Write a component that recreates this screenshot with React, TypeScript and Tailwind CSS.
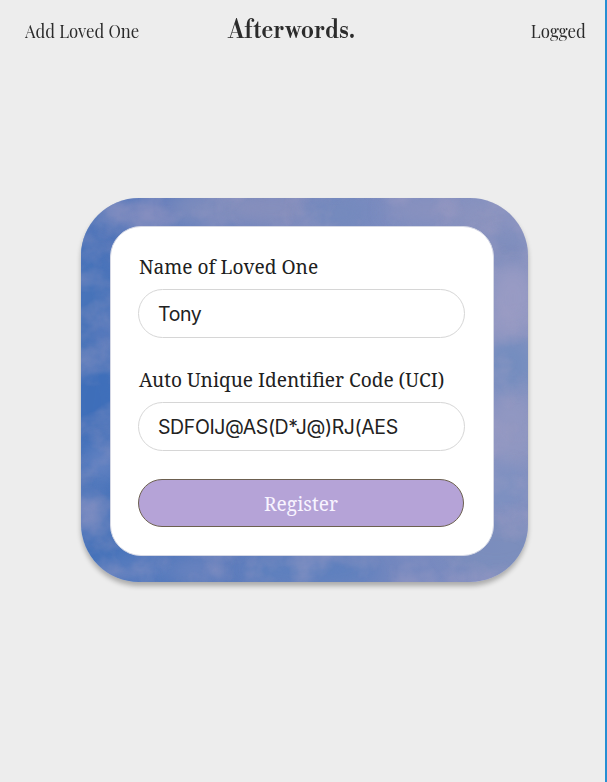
import React from "react";

const clouds = [
  { x: 25, y: 60, rx: 50, ry: 30, c: "#4f74b9", o: 0.7 },
  { x: 8, y: 155, rx: 30, ry: 110, c: "#4673ba", o: 0.8 },
  { x: 12, y: 205, rx: 30, ry: 45, c: "#3d6eba", o: 0.8 },
  { x: 22, y: 138, rx: 14, ry: 12, c: "#6f82c0", o: 0.55 },
  { x: 20, y: 265, rx: 18, ry: 20, c: "#7089c5", o: 0.7 },
  { x: 8, y: 315, rx: 16, ry: 22, c: "#8490c3", o: 0.7 },
  { x: 65, y: 15, rx: 35, ry: 12, c: "#7987bd", o: 0.8 },
  { x: 130, y: 10, rx: 40, ry: 18, c: "#8490bd", o: 0.75 },
  { x: 190, y: 10, rx: 40, ry: 20, c: "#8d92bc", o: 0.75 },
  { x: 255, y: 15, rx: 32, ry: 18, c: "#758abd", o: 0.9 },
  { x: 345, y: 12, rx: 42, ry: 13, c: "#8b92be", o: 0.8 },
  { x: 400, y: 20, rx: 25, ry: 15, c: "#8f95be", o: 0.7 },
  { x: 424, y: 53, rx: 22, ry: 18, c: "#7e8dbc", o: 0.9 },
  { x: 432, y: 100, rx: 24, ry: 34, c: "#9a9cc4", o: 0.9 },
  { x: 430, y: 168, rx: 26, ry: 28, c: "#738dbf", o: 0.9 },
  { x: 430, y: 233, rx: 26, ry: 38, c: "#9499c2", o: 0.8 },
  { x: 425, y: 290, rx: 20, ry: 20, c: "#7c91c1", o: 0.8 },
  { x: 415, y: 350, rx: 50, ry: 28, c: "#7b8ebc", o: 0.8 },
  { x: 60, y: 373, rx: 45, ry: 14, c: "#6080c0", o: 0.8 },
  { x: 115, y: 374, rx: 25, ry: 13, c: "#6f86c0", o: 0.8 },
  { x: 230, y: 373, rx: 70, ry: 16, c: "#5d80be", o: 0.9 },
];

function Sky() {
  return (
    <svg className="absolute inset-0 h-full w-full" viewBox="0 0 447 385" preserveAspectRatio="none" aria-hidden="true">
      <defs>
        <linearGradient id="sky" x1="0" y1="0.6" x2="1" y2="0.4">
          <stop offset="0" stopColor="#4472ba" />
          <stop offset="0.35" stopColor="#6881be" />
          <stop offset="1" stopColor="#8793c1" />
        </linearGradient>
        <filter id="soft" x="-80%" y="-80%" width="260%" height="260%" colorInterpolationFilters="sRGB">
          <feGaussianBlur stdDeviation="9" />
        </filter>
        <filter id="wisps" x="0" y="0" width="100%" height="100%" colorInterpolationFilters="sRGB">
          <feTurbulence type="fractalNoise" baseFrequency="0.024 0.027" numOctaves="4" seed="8" />
          <feColorMatrix values="0 0 0 0 0.66  0 0 0 0 0.63  0 0 0 0 0.77  2.6 0 0 0 -1.05" />
        </filter>
      </defs>
      <rect width="447" height="385" fill="url(#sky)" />
      {clouds.map((k, i) => (
        <ellipse key={i} cx={k.x} cy={k.y} rx={k.rx} ry={k.ry} fill={k.c} opacity={k.o} filter="url(#soft)" />
      ))}
      <rect width="447" height="385" filter="url(#wisps)" opacity="0.38" />
    </svg>
  );
}

const label = "block h-[27px] w-max whitespace-nowrap pl-px font-['Noto_Serif','DejaVu_Serif_Condensed','DejaVu_Serif',serif] text-[19.1px] leading-[27px] text-[#202020]";
const field = "block h-[49px] w-full rounded-full border border-[#d6d6d6] bg-white px-[19px] pt-px font-['Inter',sans-serif] text-[19.5px] tracking-[-0.4px] text-[#222] outline-none";

export default function App() {
  return (
    <div className="flex h-[782px] w-[607px] flex-col overflow-hidden border-r-2 border-[#268fd3] bg-[#ededed]">
      <header className="flex h-[62px] items-center pl-[25px] pr-[19px] font-['Playfair_Display','Liberation_Serif',serif] text-[#2b2b2b]">
        <span className="w-[203px] origin-left scale-x-[0.93] whitespace-nowrap text-[18px]">Add Loved One</span>
        <h1 className="origin-left scale-x-[0.9] whitespace-nowrap font-['Libre_Bodoni','Liberation_Serif',serif] text-[25.5px] font-semibold leading-none">Afterwords.</h1>
        <span className="ml-auto origin-right scale-x-[0.935] text-[18px]">Logged</span>
      </header>
      <main className="pl-[81px] pt-[136px]">
        <section className="relative h-[384px] w-[447px] overflow-hidden rounded-[58px] pl-[29px] pt-[28px] shadow-[0_4px_5px_rgba(0,0,0,0.28)]">
          <Sky />
          <form className="relative h-[330px] w-[384px] rounded-[31px] border border-[#d5d8e5] bg-white pl-[27px] pr-[28px] pt-[27px]">
            <label className={label} htmlFor="name">Name of Loved One</label>
            <input className={`${field} mt-[8px]`} id="name" defaultValue="Tony" />
            <label className={`${label} mt-[29px]`} htmlFor="code">Auto Unique Identifier Code (UCI)</label>
            <input className={`${field} mt-[8px]`} id="code" defaultValue="SDFOIJ@AS(D*J@)RJ(AES" />
            <button type="button" className="mt-[28px] flex h-[48px] w-[326px] items-center justify-center rounded-full border border-[#6c6050] bg-[#b5a3d7] pt-[2px] font-['Noto_Serif','DejaVu_Serif_Condensed','DejaVu_Serif',serif] text-[19.15px] text-[#f8f4ff]">Register</button>
          </form>
        </section>
      </main>
    </div>
  );
}
